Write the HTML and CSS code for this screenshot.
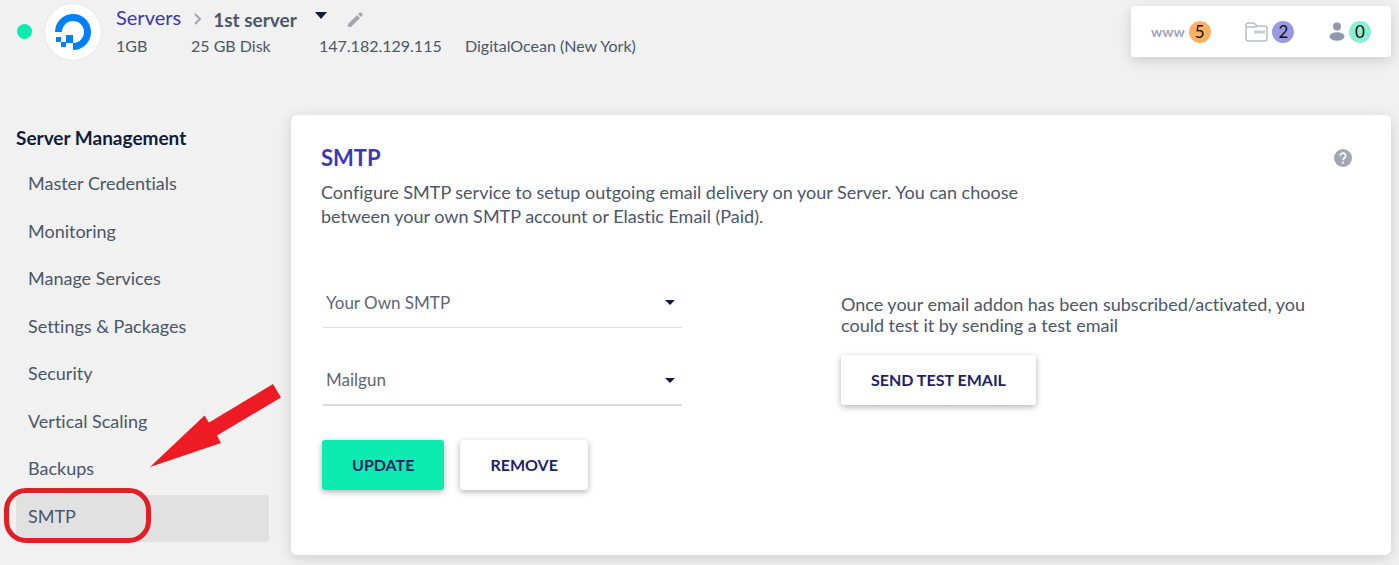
FILE: index.html
```html
<!DOCTYPE html>
<html lang="en">

<head>
    <meta charset="utf-8">
    <meta name="viewport" content="width=device-width, initial-scale=1.0">
    <title>Server Management - SMTP</title>

    <link rel="stylesheet" href="styles.css">
</head>

<body>
    <header class="topbar">
        <span class="status"></span>
        <div class="provider">
            <svg width="36" height="36" viewBox="0 0 36 36" aria-hidden="true">
                <path fill="#0080ff" d="M18 36v-7A11 11 0 1 0 7 18H0A18 18 0 1 1 18 36z" />
                <path fill="#0080ff" d="M11 21h7v8h-7zM6 28h5v5H6zM1 23h5v5H1z" />
            </svg>
        </div>

        <div class="server">
            <div class="crumbs">
                <a href="#">Servers</a>
                <svg class="chevron" width="10" height="14" viewBox="0 0 10 14" aria-hidden="true">
                    <path d="M2 2l5 5-5 5" fill="none" stroke="#a0a5b1" stroke-width="2" />
                </svg>
                <strong>1st server</strong>
                <button class="icon-btn switch" aria-label="Switch server">
                    <svg width="12" height="7" viewBox="0 0 12 7"><path d="M0 0h12L6 7z" fill="#0e1c3f" /></svg>
                </button>
                <button class="icon-btn" aria-label="Rename server">
                    <svg width="15" height="15" viewBox="0 0 15 15">
                        <path d="M0 12l9-9 3 3-9 9H0zM10 2l1.500-1.500q.7-.7 1.400 0l1.600 1.600q.7.7 0 1.400L13 5z" fill="#a3a8b0" />
                    </svg>
                </button>
            </div>
            <div class="specs">
                <span>1GB</span>
                <span>25 GB Disk</span>
                <span>147.182.129.115</span>
                <span>DigitalOcean (New York)</span>
            </div>
        </div>

        <div class="counters">
            <a href="#" class="counter" aria-label="Applications">
                <span class="www">www</span>
                <span class="badge orange">5</span>
            </a>
            <a href="#" class="counter" aria-label="Projects">
                <svg width="23" height="20" viewBox="0 0 23 20" aria-hidden="true">
                    <path d="M1 17V3q0-2 2-2h5q1 0 2 1l2 2h8q2 0 2 2v11q0 2-2 2H3q-2 0-2-2zM1 7q0-2 2-2h9" fill="none" stroke="#b9bdc9" stroke-width="1.500" />
                    <path d="M9 8.500h11v3H9z" fill="#c9ccd5" />
                </svg>
                <span class="badge purple">2</span>
            </a>
            <a href="#" class="counter" aria-label="Team members">
                <svg width="16" height="19" viewBox="0 0 16 19" aria-hidden="true">
                    <circle cx="8" cy="4.500" r="4" fill="#9097aa" />
                    <ellipse cx="8" cy="14.500" rx="7.500" ry="4.200" fill="#9097aa" />
                </svg>
                <span class="badge green">0</span>
            </a>
        </div>
    </header>

    <main class="layout">
        <nav class="sidebar">
            <h2>Server Management</h2>
            <ul class="menu">
                <li><a href="#">Master Credentials</a></li>
                <li><a href="#">Monitoring</a></li>
                <li><a href="#">Manage Services</a></li>
                <li><a href="#">Settings &amp; Packages</a></li>
                <li><a href="#">Security</a></li>
                <li><a href="#">Vertical Scaling</a></li>
                <li><a href="#">Backups</a></li>
                <li class="active">
                    <a href="#" aria-current="page">SMTP</a>
                    <span class="ring"></span>
                    <svg class="arrow" width="131" height="83" viewBox="0 0 131 83" aria-hidden="true">
                        <path d="M0 83L54.500 31.500 59 38.500 123 0l8 13.500L67 51.500 71 59z" fill="#ed1c24" />
                    </svg>
                </li>
            </ul>
        </nav>

        <section class="panel">
            <div class="panel-head">
                <h1>SMTP</h1>
                <button class="icon-btn" aria-label="Help">
                    <svg width="18" height="18" viewBox="0 0 18 18">
                        <circle cx="9" cy="9" r="9" fill="#a0a7b5" />
                        <path d="M6.300 6.800a2.700 2.600 0 1 1 4.300 2C9.500 9.600 9 10 9 11.300" fill="none" stroke="#fff" stroke-width="1.800" />
                        <path d="M8.100 12.800h1.800v1.800H8.100z" fill="#fff" />
                    </svg>
                </button>
            </div>
            <p class="intro">Configure SMTP service to setup outgoing email delivery on your Server. You can choose between your own SMTP account or Elastic Email (Paid).</p>

            <div class="columns">
                <form class="smtp-form">
                    <div class="field">
                        <select aria-label="SMTP service">
                            <option>Your Own SMTP</option>
                            <option>Elastic Email</option>
                        </select>
                    </div>
                    <div class="field focused">
                        <select aria-label="SMTP provider">
                            <option>Mailgun</option>
                        </select>
                    </div>
                    <div class="actions">
                        <button type="button" class="btn primary">UPDATE</button>
                        <button type="button" class="btn">REMOVE</button>
                    </div>
                </form>

                <div class="test">
                    <p>Once your email addon has been subscribed/activated, you could test it by sending a test email</p>
                    <button type="button" class="btn">SEND TEST EMAIL</button>
                </div>
            </div>
        </section>
    </main>
</body>

</html>
```
FILE: styles.css
```css
* {
    box-sizing: border-box;
}

body {
    margin: 0;
    background-color: #f1f1f1;
    font-family: Lato, "Open Sans", sans-serif;
    font-size: 18px;
    font-variant-ligatures: none;
    color: #4a566b;
}

h1,
h2,
p,
ul {
    margin: 0;
    padding: 0;
}

a {
    color: inherit;
    text-decoration: none;
}

button {
    font-family: inherit;
    cursor: pointer;
}

.icon-btn {
    padding: 0;
    border: 0;
    background: none;
    line-height: 0;
}

/* top bar */
.topbar {
    display: flex;
    align-items: flex-start;
    padding: 4px 8px 0 17px;
}

.status {
    width: 15px;
    height: 15px;
    margin: 20px 13px 0 0;
    border-radius: 50%;
    background-color: #0cecb0;
}

.provider {
    display: flex;
    align-items: center;
    justify-content: center;
    width: 56px;
    height: 56px;
    margin-right: 15px;
    border-radius: 50%;
    background-color: #fff;
    box-shadow: 0 0 2px rgba(0, 0, 0, 0.1);
}

.server {
    flex: 1;
}

.crumbs {
    display: flex;
    align-items: center;
    height: 30px;
    font-size: 20px;
}

.crumbs a {
    margin-bottom: 4px;
    color: #3a35b5;
}

.crumbs strong {
    font-size: 19px;
}

.chevron {
    margin: 0 10px 0 12px;
}

.switch {
    margin: 0 21px 8px 18px;
}

.specs {
    display: grid;
    grid-template-columns: 75px 128px 146px 1fr;
    font-size: 16px;
    line-height: 24px;
}

.counters {
    display: flex;
    justify-content: space-between;
    align-items: center;
    width: 260px;
    height: 51px;
    margin-top: 2px;
    padding: 0 20px;
    border-radius: 3px;
    background-color: #fff;
    box-shadow: 0 4px 14px rgba(0, 0, 0, 0.15);
}

.counter {
    display: flex;
    align-items: center;
    gap: 4px;
}

.www {
    font-size: 14px;
    font-weight: bold;
    color: #a0a6b5;
}

.badge {
    width: 22px;
    height: 22px;
    border-radius: 50%;
    font-size: 17px;
    line-height: 22px;
    text-align: center;
    color: #111;
}

.orange {
    background-color: #fbb161;
}

.purple {
    background-color: #989be2;
}

.green {
    background-color: #8cefd3;
}

/* page */
.layout {
    display: grid;
    grid-template-columns: 253px 1fr;
    gap: 22px;
    padding: 55px 8px 10px 16px;
}

.sidebar h2 {
    padding-top: 11px;
    font-size: 19px;
    line-height: 24px;
    color: #0f1c3f;
}

.menu {
    display: grid;
    grid-auto-rows: 1fr;
    min-height: 380px;
    margin-top: 12px;
    list-style: none;
}

.menu li {
    position: relative;
    display: flex;
}

.menu a {
    flex: 1;
    padding: 9px 12px;
    border-radius: 3px;
    line-height: 24px;
}

.active a {
    background-color: #e1e1e1;
}

.ring {
    position: absolute;
    top: -7px;
    left: -12px;
    width: 147px;
    height: 55px;
    border: 5px solid #e31e26;
    border-radius: 22px;
}

.arrow {
    position: absolute;
    top: -111px;
    left: 134px;
}

.panel {
    min-height: 440px;
    padding: 30px;
    border-radius: 6px;
    background-color: #fff;
    box-shadow: 0 3px 14px rgba(0, 0, 0, 0.15);
}

.panel-head {
    display: flex;
    justify-content: space-between;
    align-items: center;
    padding-right: 9px;
}

.panel h1 {
    font-size: 22px;
    line-height: 26px;
    color: #3a38b8;
}

.intro {
    max-width: 710px;
    margin-top: 9px;
    line-height: 24px;
}

.columns {
    display: grid;
    grid-template-columns: 1fr 1fr;
    margin-top: 49px;
}

.field {
    position: relative;
    width: 359px;
    max-width: 100%;
    margin: 0 0 27px 2px;
}

.field::after {
    content: "";
    position: absolute;
    top: 23px;
    right: 7px;
    border: 5px solid transparent;
    border-top-color: #0e1c3f;
    border-bottom: 0;
    pointer-events: none;
}

.field select {
    width: 100%;
    height: 51px;
    padding: 0 24px 0 3px;
    border: 0;
    border-bottom: 1px solid #dcdcdc;
    border-radius: 0;
    background: none;
    appearance: none;
    font-family: inherit;
    font-size: 17px;
    color: #5d6678;
}

.focused select {
    border-bottom-width: 2px;
}

.actions {
    display: flex;
    gap: 16px;
    margin: 34px 0 0 1px;
}

.btn {
    height: 50px;
    padding: 0 30px 2px;
    border: 0;
    border-radius: 3px;
    background-color: #fff;
    box-shadow: 0 2px 6px rgba(0, 0, 0, 0.3);
    font-size: 16px;
    font-weight: bold;
    color: #221f66;
}

.primary {
    background-color: #0cecb0;
}

.test {
    padding-top: 17px;
}

.test p {
    max-width: 480px;
    margin-bottom: 19px;
    line-height: 21px;
}
```
